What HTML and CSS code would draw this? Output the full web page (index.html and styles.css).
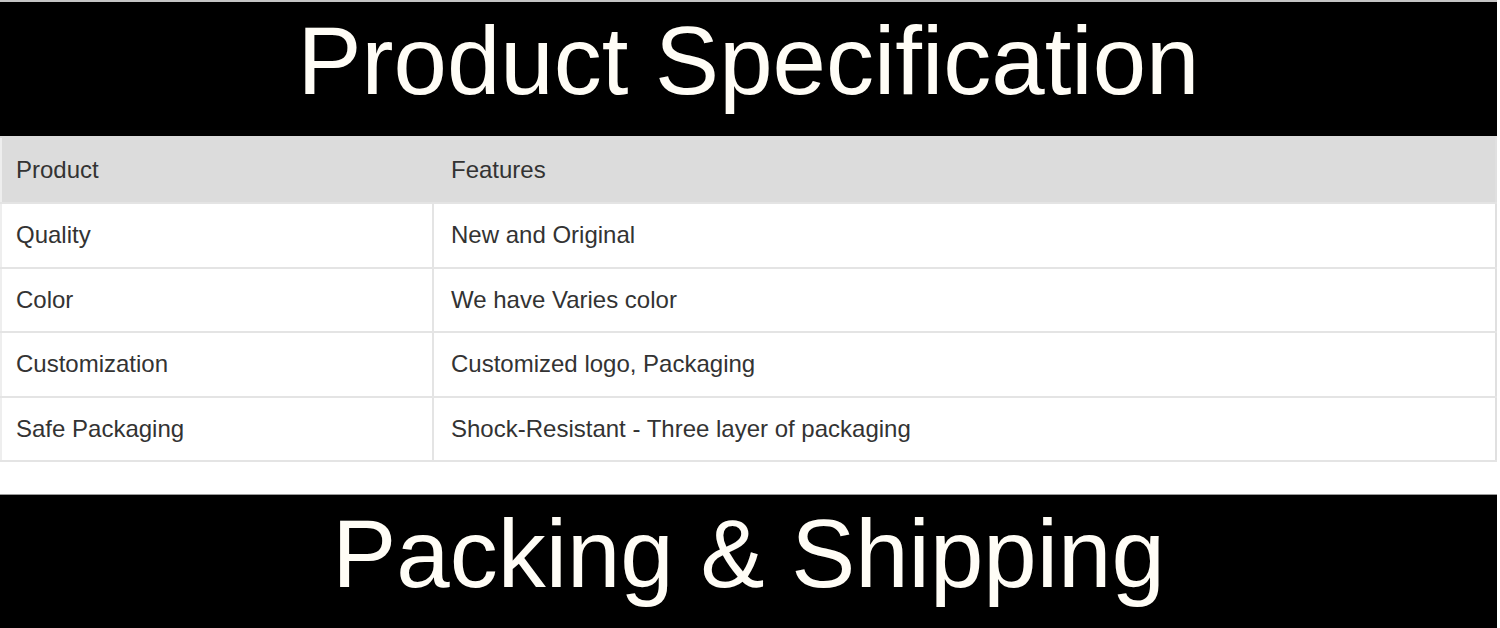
FILE: index.html
```html
<!DOCTYPE html>
<html lang="en">
<head>
<meta charset="utf-8">
<title>Product Specification</title>
<link rel="stylesheet" href="styles.css">
</head>
<body>
<div class="page">
  <h2 class="banner banner-first">Product Specification</h2>
  <table class="spec">
    <thead>
      <tr><th class="col-a">Product</th><th>Features</th></tr>
    </thead>
    <tbody>
      <tr><td>Quality</td><td>New and Original</td></tr>
      <tr><td>Color</td><td>We have Varies color</td></tr>
      <tr><td>Customization</td><td>Customized logo, Packaging</td></tr>
      <tr><td>Safe Packaging</td><td>Shock-Resistant - Three layer of packaging</td></tr>
    </tbody>
  </table>
  <h2 class="banner banner-second">Packing &amp; Shipping</h2>
</div>
</body>
</html>
```

FILE: styles.css
```css
html, body {
  margin: 0;
  padding: 0;
  background: #ffffff;
}

body {
  font-family: "Liberation Sans", Arial, sans-serif;
  overflow: hidden;
}

.page {
  width: 1497px;
}

.banner {
  margin: 0;
  background: #000000;
  color: #fffdf6;
  font-weight: normal;
  font-size: 96px;
  line-height: 109px;
  text-align: center;
  padding: 4px 0 21px;
}

.banner-first {
  border-top: 2px solid #c4c4c4;
}

.banner-second {
  margin-top: 32px;
  border-top: 1px solid #9a9a9a;
}

.spec {
  width: 100%;
  border-collapse: collapse;
  font-size: 24px;
  line-height: 28px;
  color: #333333;
}

.spec th,
.spec td {
  text-align: left;
  font-weight: normal;
  padding: 17px 16px 17.5px 17px;
  border: 2px solid #e4e4e4;
}

.spec th {
  background: #dcdcdc;
  border-color: #dcdcdc;
  padding-top: 18px;
  padding-bottom: 18px;
  border-bottom-color: #e4e4e4;
}

.spec tr > :first-child {
  width: 400px;
  padding-left: 14px;
  border-left-color: #eeeeee;
}

.spec tr > :last-child {
  border-right-color: #e0e0e0;
}
```
